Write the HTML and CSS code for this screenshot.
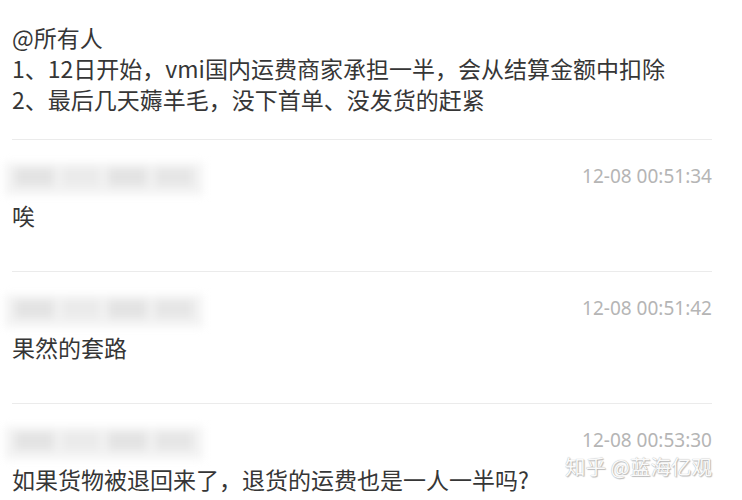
FILE: index.html
```html
<!DOCTYPE html>
<html lang="zh-CN">
<head>
  <meta charset="UTF-8" />
  <meta name="viewport" content="width=device-width, initial-scale=1.0" />
  <title>群消息</title>
  <link rel="stylesheet" href="styles.css">
</head>
<body>

  <!-- NOTICE -->
  <div class="notice">
    <p>@所有人</p>
    <p>1、12日开始，vmi国内运费商家承担一半，会从结算金额中扣除</p>
    <p>2、最后几天薅羊毛，没下首单、没发货的赶紧</p>
  </div>

  <!-- COMMENTS -->
  <div class="comment">
    <div class="comment-head">
      <div class="name-blur"><span></span><span></span><span></span><span></span></div>
      <span class="time">12-08 00:51:34</span>
    </div>
    <p class="text">唉</p>
  </div>

  <div class="comment">
    <div class="comment-head">
      <div class="name-blur"><span></span><span></span><span></span><span></span></div>
      <span class="time">12-08 00:51:42</span>
    </div>
    <p class="text">果然的套路</p>
  </div>

  <div class="comment last">
    <div class="comment-head">
      <div class="name-blur"><span></span><span></span><span></span><span></span></div>
      <span class="time">12-08 00:53:30</span>
    </div>
    <p class="text">如果货物被退回来了，退货的运费也是一人一半吗?</p>
  </div>

  <div class="watermark">知乎 @蓝海亿观</div>

</body>
</html>
```

FILE: styles.css
```css
/* Global */
* { box-sizing: border-box; margin: 0; padding: 0; }

body {
  background-color: #fff;
  font-family: "Noto Sans CJK SC", "Noto Sans", sans-serif;
  color: #363636;
  font-size: 23px;
  line-height: 31px;
  padding: 22px 30px 0 12px;
  position: relative;
}

/* Notice */
.notice {
  padding-bottom: 24px;
}

/* Comments */
.comment {
  border-top: 1px solid #ebebeb;
  padding-top: 23px;
  padding-bottom: 40px;
}

.comment.last { padding-bottom: 0; }

.comment-head {
  display: flex;
  justify-content: space-between;
  align-items: flex-start;
  height: 32px;
  margin-bottom: 5px;
}

.name-blur {
  display: flex;
  gap: 8px;
  width: 198px;
  height: 32px;
  margin-left: -7px;
  padding: 5px 10px 9px;
  background-color: #f3f3f3;
  filter: blur(4px);
}

.name-blur span {
  flex: 1;
  height: 18px;
  background-color: #e3e3e3;
}

.name-blur span:nth-child(2) { background-color: #ebebeb; }
.name-blur span:nth-child(4) { background-color: #e6e6e6; }

.time {
  font-family: "Noto Sans", sans-serif;
  font-size: 19px;
  line-height: 26px;
  color: #b5b5b5;
}

.text {
  color: #363636;
}

/* Watermark */
.watermark {
  position: absolute;
  right: 30px;
  top: 451px;
  font-size: 20.5px;
  line-height: 30px;
  color: #fafafa;
  text-shadow: 0 0 1px #a0a0a0, 1px 1px 1px #bdbdbd;
}
```
